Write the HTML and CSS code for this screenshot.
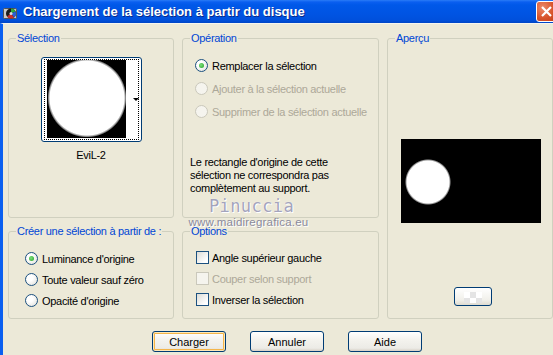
FILE: index.html
```html
<!DOCTYPE html>
<html>
<head lang="fr">
    <meta charset="UTF-8">
    <title>Chargement de la sélection à partir du disque</title>
    <link rel="stylesheet" href="styles.css">
</head>
<body>
<div class="window">
    <div class="titlebar">
        <svg class="app-icon" width="15" height="14" viewBox="0 0 15 14">
            <rect x="0.5" y="2.5" width="13" height="10" rx="1" fill="#c8c8c8" stroke="#555"/>
            <circle cx="8" cy="7.5" r="5" fill="#1b1b1b"/>
            <path d="M8 7.5 L8 2.5 A5 5 0 0 1 12.5 5.5 Z" fill="#2fa83a"/>
            <path d="M8 7.5 L12.5 5.5 A5 5 0 0 1 11 11.5 Z" fill="#2c5fd6"/>
            <path d="M8 7.5 L11 11.5 A5 5 0 0 1 4 10.5 Z" fill="#c9302c"/>
            <circle cx="8" cy="7.5" r="1.5" fill="#ddd"/>
        </svg>
        <span class="title">Chargement de la sélection à partir du disque</span>
        <span class="close">
            <svg width="13" height="13" viewBox="0 0 13 13"><path d="M2 2 L11 11 M11 2 L2 11" stroke="#fff" stroke-width="2.2"/></svg>
        </span>
    </div>
    <div class="client">
        <div class="groups">
            <fieldset class="grp sel">
                <legend>Sélection</legend>
                <div class="thumb">
                    <div class="thumb-focus">
                        <div class="thumb-img"></div>
                        <div class="thumb-strip"><span class="thumb-arrow"></span></div>
                    </div>
                </div>
                <div class="thumb-name">EviL-2</div>
            </fieldset>

            <fieldset class="grp op">
                <legend>Opération</legend>
                <div class="rows op-rows">
                    <label class="opt"><span class="radio on"></span>Remplacer la sélection</label>
                    <label class="opt off"><span class="radio"></span>Ajouter à la sélection actuelle</label>
                    <label class="opt off"><span class="radio"></span>Supprimer de la sélection actuelle</label>
                </div>
                <p class="note">Le rectangle d'origine de cette<br>sélection ne correspondra pas<br>complètement au support.</p>
            </fieldset>

            <fieldset class="grp preview">
                <legend>Aperçu</legend>
                <div class="preview-img"></div>
                <button class="swatch" type="button"><span class="checker"></span></button>
            </fieldset>

            <fieldset class="grp create">
                <legend>Créer une sélection à partir de :</legend>
                <div class="rows">
                    <label class="opt"><span class="radio on"></span>Luminance d'origine</label>
                    <label class="opt"><span class="radio"></span>Toute valeur sauf zéro</label>
                    <label class="opt"><span class="radio"></span>Opacité d'origine</label>
                </div>
            </fieldset>

            <fieldset class="grp options">
                <legend>Options</legend>
                <div class="rows">
                    <label class="opt chk"><span class="check"></span>Angle supérieur gauche</label>
                    <label class="opt chk off"><span class="check"></span>Couper selon support</label>
                    <label class="opt chk"><span class="check"></span>Inverser la sélection</label>
                </div>
            </fieldset>
        </div>

        <div class="actions">
            <button class="btn default" type="button">Charger</button>
            <button class="btn" type="button">Annuler</button>
            <button class="btn" type="button">Aide</button>
        </div>

        <div class="watermark">
            <span class="wm-name">Pinuccia</span>
            <span class="wm-url">www.maidiregrafica.eu</span>
        </div>
    </div>
</div>
</body>
</html>
```

FILE: styles.css
```css
*{
    margin: 0;
    padding: 0;
    box-sizing: border-box;
}
html, body{
    width: 553px;
    height: 355px;
    overflow: hidden;
}
body{
    background: #ECE9D8;
    font-family: "Liberation Sans", Arial, sans-serif;
    font-size: 11px;
    letter-spacing: -0.3px;
    color: #000;
}
.window{
    height: 355px;
}

/* title bar */
.titlebar{
    height: 23px;
    display: flex;
    align-items: center;
    position: relative;
    background: linear-gradient(#2a7cf6 0, #0a5ff0 2px, #0058e8 5px, #0054e3 14px, #0050dc 20px, #0046c6 23px);
    color: #fff;
}
.app-icon{
    margin: 2px 5px 0 3px;
}
.title{
    font-weight: bold;
    font-size: 13px;
    letter-spacing: 0;
    text-shadow: 1px 1px 0 #0a2a8a;
}
.close{
    position: absolute;
    left: 536px;
    top: 1px;
    width: 21px;
    height: 21px;
    border: 1px solid #fff;
    border-radius: 3px;
    background: radial-gradient(circle at 30% 30%, #ec8a6a, #d8542c 55%, #c03c16);
    display: flex;
    align-items: center;
    justify-content: center;
}

/* client */
.client{
    position: relative;
    height: 332px;
    border-left: 3px solid #0a5ff0;
    border-top: 1px solid #f6f5ee;
}
.groups{
    display: grid;
    grid-template-columns: 166px 197px 166px;
    grid-template-rows: 186px 94px;
    column-gap: 8px;
    row-gap: 7px;
    padding: 8px 0 0 5px;
}
.grp{
    min-width: 0;
    border: 1px solid #D0D0BF;
    border-radius: 3px;
    padding: 0 7px;
}
.grp legend{
    color: #0046D5;
    line-height: 13px;
    padding: 0 1px;
    white-space: nowrap;
}
.preview{
    grid-column: 3;
    grid-row: 1 / span 2;
}

/* selection thumbnail */
.thumb{
    width: 101px;
    height: 85px;
    margin: 12px auto 0;
    border: 1px solid #003C74;
    border-radius: 3px;
    background: #fff;
    padding: 1px 2px;
}
.thumb-focus{
    display: flex;
    height: 81px;
    border: 1px dotted #000;
    padding: 0 0 1px 2px;
}
.thumb-img{
    width: 79px;
    height: 78px;
    background: radial-gradient(circle at 40px 38px, #fff 37px, #888 38.5px, #000 39.5px);
}
.thumb-strip{
    flex: 1;
    display: flex;
    align-items: center;
    justify-content: flex-end;
}
.thumb-arrow{
    width: 0;
    height: 0;
    margin-right: -1px;
    border-left: 3px solid transparent;
    border-right: 3px solid transparent;
    border-top: 3px solid #000;
}
.thumb-name{
    text-align: center;
    line-height: 13px;
    margin-top: 7px;
}

/* rows of radios and checkboxes */
.rows{
    display: flex;
    flex-direction: column;
    padding-top: 10px;
}
.op .rows{
    padding: 9px 0 0 5px;
}
.op-rows .opt{
    height: 23px;
}
.create .rows{
    padding-left: 9px;
}
.options .rows{
    padding: 9px 0 0 6px;
}
.opt{
    height: 21px;
    display: flex;
    align-items: center;
    gap: 4px;
    white-space: nowrap;
}
.opt.chk{
    gap: 3px;
}
.opt.off{
    color: #ACA899;
}
.radio{
    width: 13px;
    height: 13px;
    border: 1px solid #1C5180;
    border-radius: 50%;
    background: radial-gradient(circle at 35% 35%, #fff 30%, #dcdcd5 100%);
    display: flex;
    align-items: center;
    justify-content: center;
}
.radio.on::after{
    content: "";
    width: 5px;
    height: 5px;
    border-radius: 50%;
    background: radial-gradient(circle at 40% 40%, #7ee07e, #21a121);
}
.off .radio,
.off .check{
    border-color: #CAC8BB;
    background: #f5f4ee;
}
.check{
    width: 13px;
    height: 13px;
    border: 1px solid #1C5180;
    background: linear-gradient(135deg, #dcdcd7, #fff 80%);
}
.note{
    line-height: 13px;
    margin-top: 33px;
}

/* preview */
.preview-img{
    width: 140px;
    height: 84px;
    margin: 94px 0 0 6px;
    background: radial-gradient(circle at 27px 43px, #fff 21px, #999 22px, #000 23px);
}
.swatch{
    display: block;
    width: 38px;
    height: 19px;
    margin: 64px 0 0 59px;
    border: 1px solid #003C74;
    border-radius: 3px;
    background: linear-gradient(#fff, #f1f0ea 70%, #dedbd0);
    position: relative;
}
.checker{
    position: absolute;
    left: 9px;
    top: 4px;
    width: 18px;
    height: 11px;
    background: conic-gradient(#e4e4e4 25%, #fff 0 50%, #e4e4e4 0 75%, #fff 0) 0 0 / 12px 12px;
}

/* buttons */
.actions{
    display: flex;
    gap: 24px;
    padding: 12px 0 0 149px;
}
.btn{
    width: 74px;
    height: 21px;
    border: 1px solid #003C74;
    border-radius: 3px;
    background: linear-gradient(#fff, #f4f3ee 40%, #ecebe6 85%, #d6d0c5);
    font-family: "Liberation Sans", Arial, sans-serif;
    font-size: 11px;
    color: #000;
}
.btn.default{
    box-shadow: inset 0 0 0 1px #fde8b8, inset 0 0 0 2px #f4b54a;
}

/* overlay watermark */
.watermark{
    position: absolute;
    left: 183px;
    top: 172px;
    width: 125px;
    display: flex;
    flex-direction: column;
    align-items: center;
    letter-spacing: 0;
    pointer-events: none;
}
.wm-name{
    font-family: "DejaVu Sans Mono", monospace;
    font-size: 17px;
    line-height: 20px;
    letter-spacing: 0.4px;
    color: #a4a4bc;
    text-shadow: 0 0 1px #fff, 1px 1px 0 #fff;
    margin-left: 6px;
}
.wm-url{
    font-size: 11.5px;
    line-height: 12px;
    letter-spacing: 0.2px;
    color: #8a8a9c;
    text-shadow: 1px 1px 0 #fff;
}
```
